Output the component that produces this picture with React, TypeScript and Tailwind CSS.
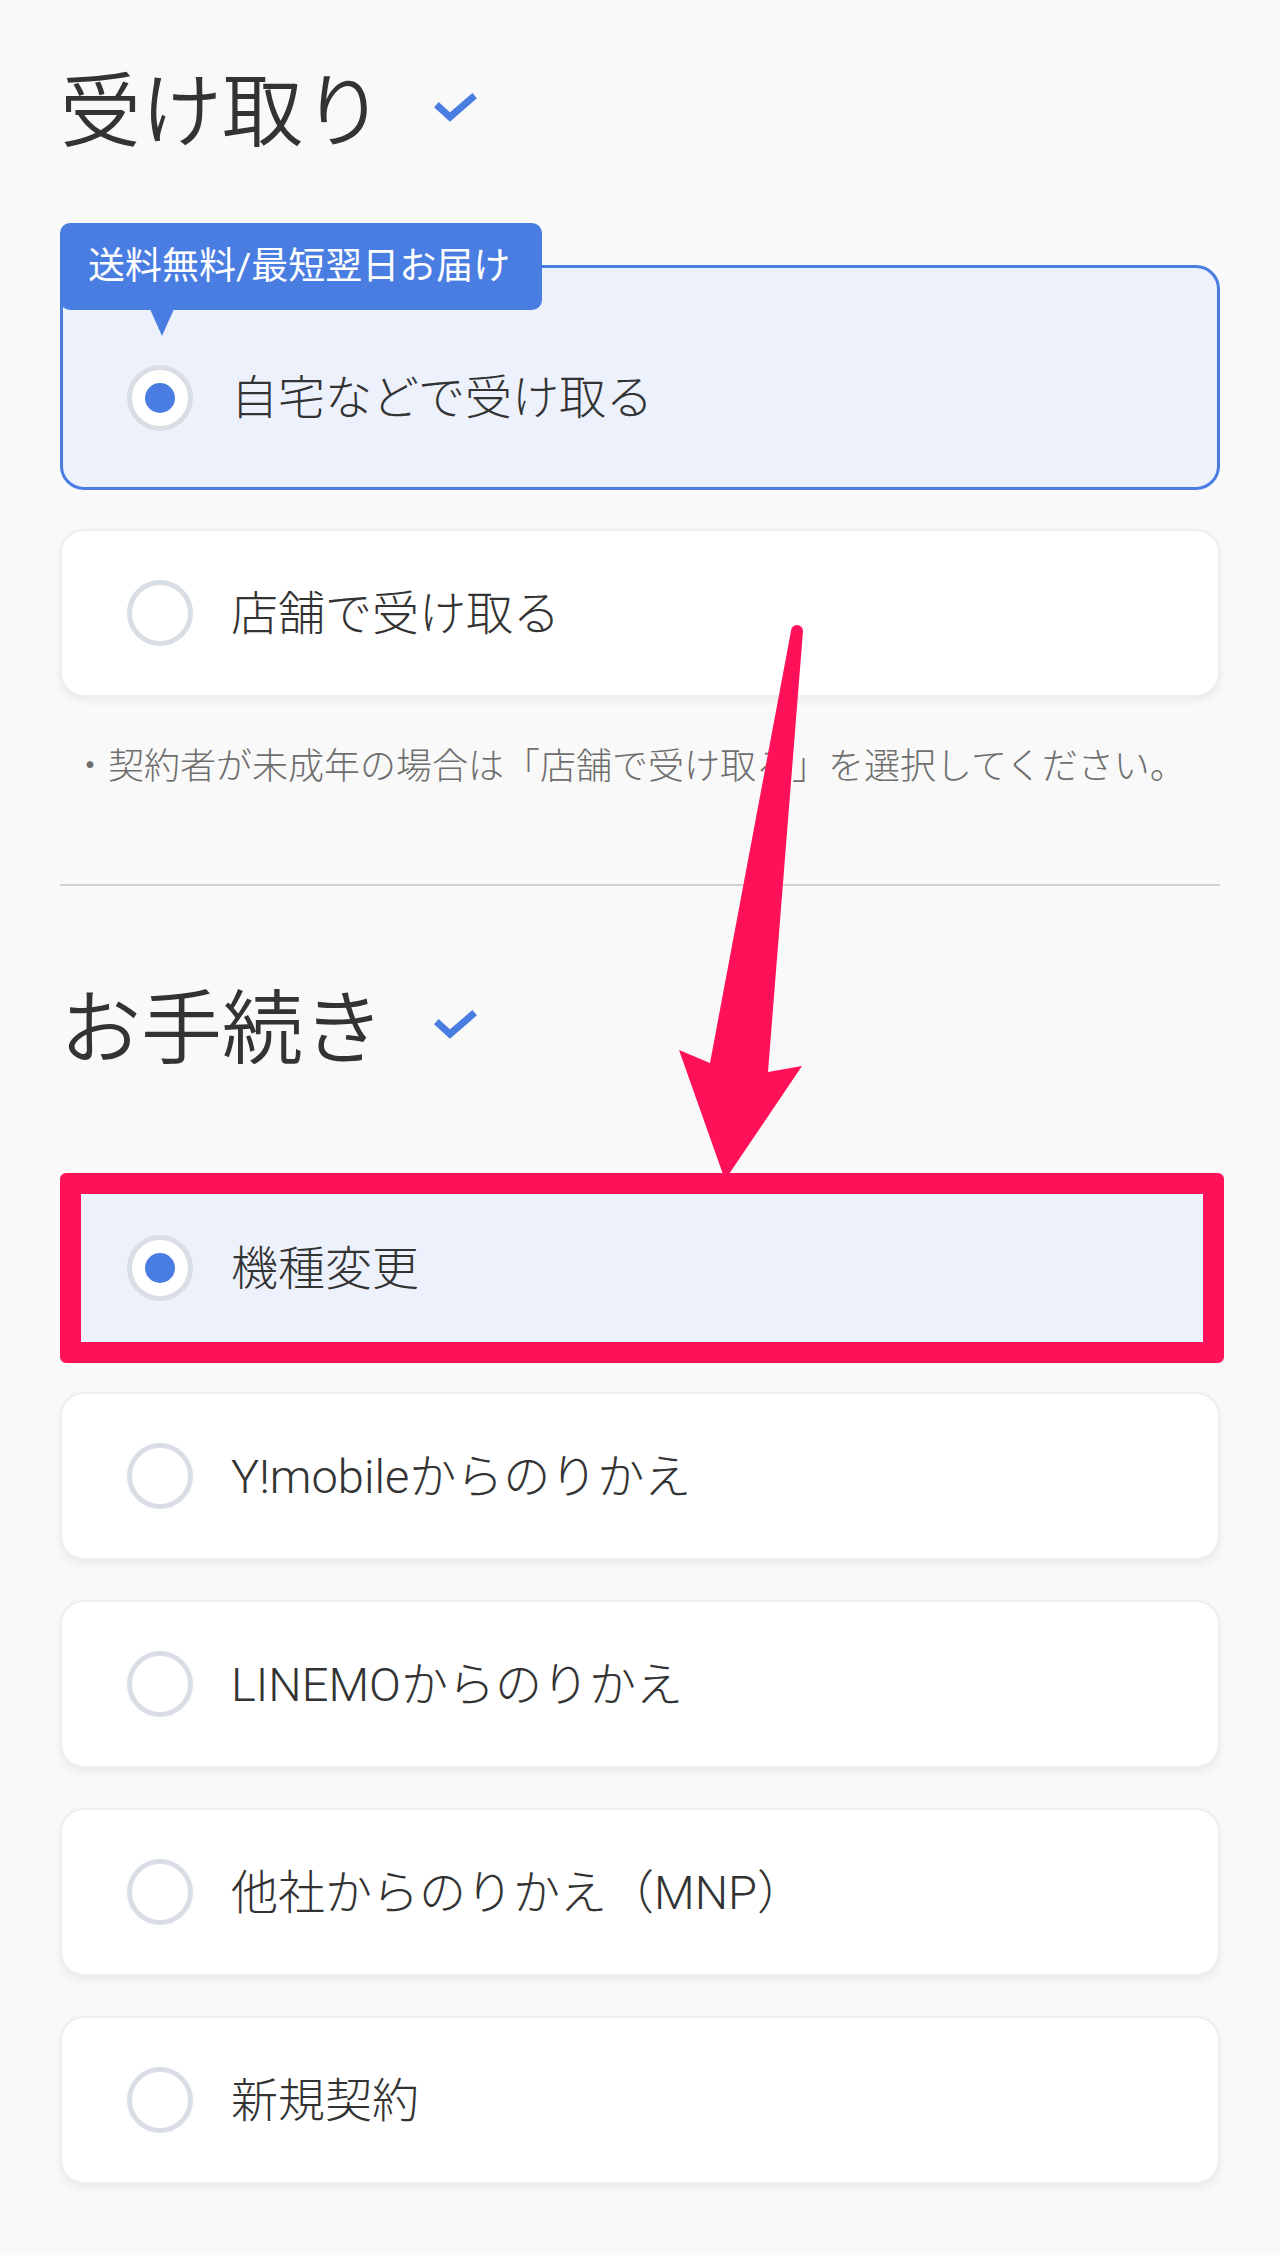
import type { ReactNode } from 'react';

const FONT = { fontFamily: 'Roboto, "Noto Sans CJK JP", "Noto Sans", sans-serif' };

function Check() {
    return (
        <svg width="44" height="34" viewBox="0 0 44 34" className="mb-[8px]">
            <path d="M5 15 L16 25 L38 6" fill="none" stroke="#4a7de1" strokeWidth="7" strokeLinecap="square" strokeLinejoin="miter" />
        </svg>
    );
}

function Heading({ children }: { children: ReactNode }) {
    return (
        <div className="flex items-center gap-[50px]">
            <h2 className="text-[81px] leading-none font-[350] text-[#333333]">{children}</h2>
            <Check />
        </div>
    );
}

function Radio({ checked }: { checked?: boolean }) {
    return (
        <span className="flex h-[66px] w-[66px] shrink-0 items-center justify-center rounded-full border-[5px] border-[#d9dee4] bg-white">
            {checked && <span className="h-[30px] w-[30px] rounded-full bg-[#4a7de1]" />}
        </span>
    );
}

function Option({ label, checked }: { label: string; checked?: boolean }) {
    return (
        <div
            className={
                checked
                    ? 'flex h-[168px] items-center gap-[38px] rounded-[24px] border-[3px] border-[#4a7de1] bg-[#ecf1fc] pl-[64px]'
                    : 'flex h-[168px] items-center gap-[38px] rounded-[24px] border-2 border-[#eeeeee] bg-white pl-[65px] shadow-[0_4px_8px_rgba(0,0,0,0.06)]'
            }
        >
            <Radio checked={checked} />
            <span className="text-[47px] leading-none font-light text-[#333333]">{label}</span>
        </div>
    );
}

export default function App() {
    return (
        <div className="relative min-h-[2255px] bg-[#f9f9f9] px-[60px] pt-[72px]" style={FONT}>
            {/* 受け取り */}
            <Heading>受け取り</Heading>

            <div className="relative mt-[112px]">
                <div className="absolute left-0 top-[-42px] z-10 flex h-[87px] w-[482px] items-center rounded-[10px] bg-[#4a7de1] pl-[28px] text-[37px] leading-none font-normal text-white">
                    送料無料/最短翌日お届け
                    <span className="absolute left-[90px] top-[86px] h-0 w-0 border-x-[12px] border-t-[27px] border-x-transparent border-t-[#4a7de1]" />
                </div>
                <div className="flex h-[225px] items-center gap-[38px] rounded-[24px] border-[3px] border-[#4a7de1] bg-[#ecf1fc] pl-[64px] pt-[40px]">
                    <Radio checked />
                    <span className="text-[47px] leading-none font-light text-[#333333]">自宅などで受け取る</span>
                </div>
            </div>

            <div className="mt-[39px]">
                <Option label="店舗で受け取る" />
            </div>

            <p className="mt-[52px] pl-[12px] text-[36px] leading-none font-light text-[#6e6e6e]">
                ・契約者が未成年の場合は「店舗で受け取る」を選択してください。
            </p>

            <hr className="mt-[99px] h-[2px] border-0 bg-[#d2d2d2]" />

            {/* お手続き */}
            <div className="mt-[103px]">
                <Heading>お手続き</Heading>
            </div>

            <div className="mt-[114px] flex flex-col gap-[40px]">
                <div className="relative">
                    <Option label="機種変更" checked />
                    <div className="absolute bottom-[-11px] left-0 right-[-4px] top-[-11px] rounded-[6px] border-[21px] border-[#ff1159]" />
                </div>
                <Option label="Y!mobileからのりかえ" />
                <Option label="LINEMOからのりかえ" />
                <Option label="他社からのりかえ（MNP）" />
                <Option label="新規契約" />
            </div>

            {/* annotation arrow */}
            <svg className="pointer-events-none absolute left-0 top-0" width="1280" height="2255" viewBox="0 0 1280 2255">
                <path d="M791 631 A6 6 0 0 1 803 631 L768 1072 L802 1066 L725 1180 L679 1050 L710 1063 Z" fill="#ff1159" />
            </svg>
        </div>
    );
}
